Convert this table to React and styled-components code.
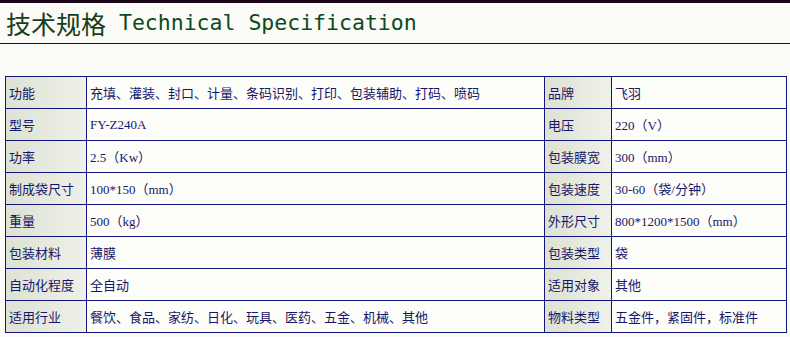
import styled, { createGlobalStyle } from "styled-components";

const GlobalStyle = createGlobalStyle`
  body {
    margin: 0;
    background: #fbfbf7;
    font-family: "Noto Sans CJK SC", sans-serif;
  }
`;

const Page = styled.div`
  width: 790px;
  height: 337px;
  overflow: hidden;
  border-top: 3px solid #1a0618;
`;

const Header = styled.div`
  height: 40px;
  display: flex;
  align-items: center;
  padding-left: 6px;
  border-bottom: 1px solid #111;
  color: #143f1c;
  white-space: pre;
`;

const TitleCn = styled.span`
  font-family: "Noto Sans CJK SC", sans-serif;
  font-size: 25px;
  line-height: 1;
  letter-spacing: 0;
`;

const TitleEn = styled.span`
  font-family: "DejaVu Sans Mono", monospace;
  font-size: 21.5px;
  line-height: 1;
  color: #0c4a1d;
`;

const Table = styled.div`
  margin: 32px 0 0 5px;
  width: 780px;
  display: grid;
  grid-template-columns: 80px 457px 66px 174px;
  grid-auto-rows: 31px;
  gap: 1px;
  padding: 1px;
  background: #14147e;
`;

const Cell = styled.div`
  display: flex;
  align-items: center;
  padding-left: 3px;
  font-size: 13px;
  color: #17176a;
  white-space: nowrap;
  overflow: hidden;
  background: ${({ $label }) =>
    $label
      ? "linear-gradient(to right, #dde2d3, #e8ebe0 60%, #eff1ea)"
      : "#fdfdf9"};
  font-family: ${({ $label }) =>
    $label
      ? '"Noto Sans CJK SC", sans-serif'
      : '"Liberation Serif", "Noto Sans CJK SC", serif'};
`;

const specs = [
  ["功能", "充填、灌装、封口、计量、条码识别、打印、包装辅助、打码、喷码", "品牌", "飞羽"],
  ["型号", "FY-Z240A", "电压", "220（V）"],
  ["功率", "2.5（Kw）", "包装膜宽", "300（mm）"],
  ["制成袋尺寸", "100*150（mm）", "包装速度", "30-60（袋/分钟）"],
  ["重量", "500（kg）", "外形尺寸", "800*1200*1500（mm）"],
  ["包装材料", "薄膜", "包装类型", "袋"],
  ["自动化程度", "全自动", "适用对象", "其他"],
  ["适用行业", "餐饮、食品、家纺、日化、玩具、医药、五金、机械、其他", "物料类型", "五金件，紧固件，标准件"],
];

export default function App() {
  return (
    <>
      <GlobalStyle />
      <Page>
        <Header>
          <TitleCn>技术规格</TitleCn>
          <TitleEn> Technical Specification</TitleEn>
        </Header>
        <Table>
          {specs.map(([l1, v1, l2, v2]) => [
            <Cell $label key={l1}>{l1}</Cell>,
            <Cell key={l1 + "v"}>{v1}</Cell>,
            <Cell $label key={l2}>{l2}</Cell>,
            <Cell key={l2 + "v"}>{v2}</Cell>,
          ])}
        </Table>
      </Page>
    </>
  );
}
